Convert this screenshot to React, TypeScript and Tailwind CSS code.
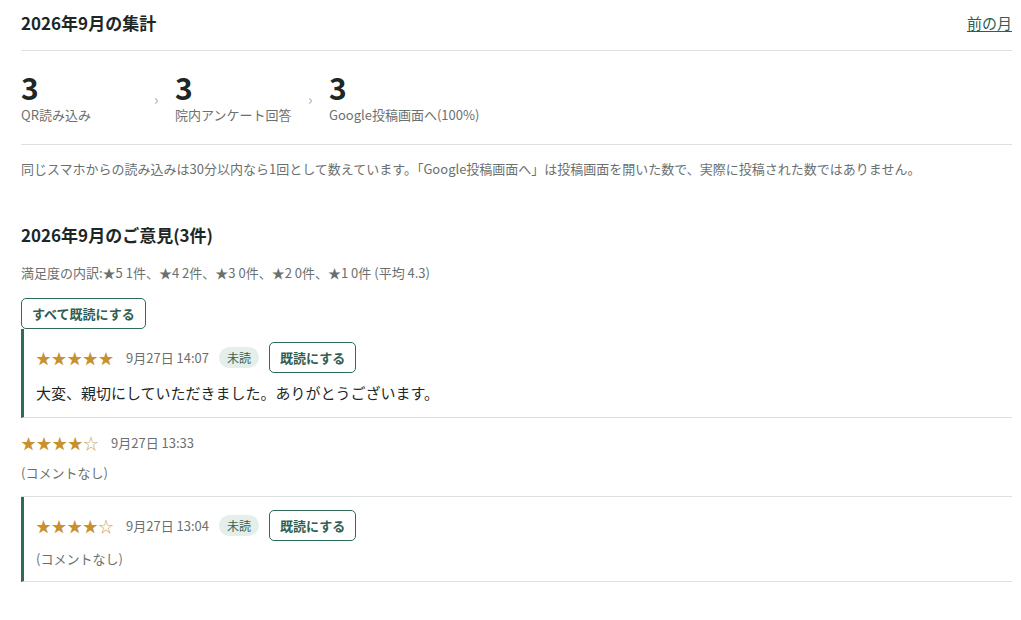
import React from "react";

type Review = {
    id: string;
    rating: number;
    date: string;
    comment: string | null;
    unread: boolean;
};

const reviews: Review[] = [
    { id: "r1", rating: 5, date: "9月27日 14:07", comment: "大変、親切にしていただきました。ありがとうございます。", unread: true },
    { id: "r2", rating: 4, date: "9月27日 13:33", comment: null, unread: false },
    { id: "r3", rating: 4, date: "9月27日 13:04", comment: null, unread: true },
];

const stats = [
    { value: 3, label: "QR読み込み" },
    { value: 3, label: "院内アンケート回答" },
    { value: 3, label: "Google投稿画面へ(100%)" },
];

function Stars({ rating }: { rating: number }) {
    return (
        <span className="text-[15px] leading-6 text-[#c8902f] tracking-[0.6px]">
            {"★".repeat(rating)}
            <span className="text-[#c9a468]">{"☆".repeat(5 - rating)}</span>
        </span>
    );
}

export default function App() {
    return (
        <div
            className="min-h-[620px] bg-white pl-[21px] pr-[9px] text-[#1d2726]"
            style={{ fontFamily: '"Noto Sans CJK JP", "Noto Sans", sans-serif' }}
        >
            {/* Summary header */}
            <div className="flex items-center justify-between border-b border-[#dde0e0] pt-[11px] pb-[15px]">
                <h2 className="text-[17px] font-bold leading-6">2026年9月の集計</h2>
                <a href="#" className="text-[15px] leading-6 text-[#2f5e52] underline underline-offset-2">
                    前の月
                </a>
            </div>

            {/* Stats */}
            <div className="flex border-b border-[#dde0e0] pt-[19px] pb-[19px]">
                {stats.map((s, i) => (
                    <div key={i} className="relative w-[154px]">
                        {i > 0 && (
                            <span className="absolute -left-[21px] top-[18px] text-[15px] text-[#a9adac]">›</span>
                        )}
                        <div className="text-[30px] font-bold leading-[35px]">{s.value}</div>
                        <div className="text-[13px] leading-5 text-[#6b706f]">{s.label}</div>
                    </div>
                ))}
            </div>

            <p className="pt-[14px] text-[13px] leading-5 text-[#6b706f]">
                同じスマホからの読み込みは30分以内なら1回として数えています。「Google投稿画面へ」は投稿画面を開いた数で、実際に投稿された数ではありません。
            </p>

            {/* Feedback */}
            <h2 className="mt-[44px] text-[17px] font-bold leading-6">2026年9月のご意見(3件)</h2>
            <p className="mt-[17px] text-[13px] leading-[18px] text-[#6b706f]">
                満足度の内訳:★5 1件、★4 2件、★3 0件、★2 0件、★1 0件 (平均 4.3)
            </p>
            <button className="mt-[16px] h-[31px] rounded-[5px] border border-[#2f6b5a] px-[10px] text-[13px] font-bold text-[#2f5e52]">
                すべて既読にする
            </button>

            <ul>
                {reviews.map((r) => (
                    <li
                        key={r.id}
                        className={
                            r.unread
                                ? "border-b border-l-[3px] border-b-[#dde0e0] border-l-[#2f6b5a] pl-[12px] pt-[13px] pb-3"
                                : "border-b border-[#dde0e0] pt-[13px] pb-[13px]"
                        }
                    >
                        <div className="flex items-center">
                            <Stars rating={r.rating} />
                            <span className="ml-[12px] text-[13px] text-[#6b706f]">{r.date}</span>
                            {r.unread && (
                                <>
                                    <span className="ml-[10px] rounded-full bg-[#e4eeea] px-[8px] py-[1px] text-[12px] leading-[19px] text-[#3c5f54]">
                                        未読
                                    </span>
                                    <button className="ml-[10px] h-[31px] rounded-[5px] border border-[#2f6b5a] px-[10px] text-[13px] font-bold text-[#2f5e52]">
                                        既読にする
                                    </button>
                                </>
                            )}
                        </div>
                        {r.comment ? (
                            <p className="mt-2 text-[15px] leading-6">{r.comment}</p>
                        ) : (
                            <p className="mt-2 text-[13px] leading-5 text-[#6b706f]">(コメントなし)</p>
                        )}
                    </li>
                ))}
            </ul>
        </div>
    );
}
